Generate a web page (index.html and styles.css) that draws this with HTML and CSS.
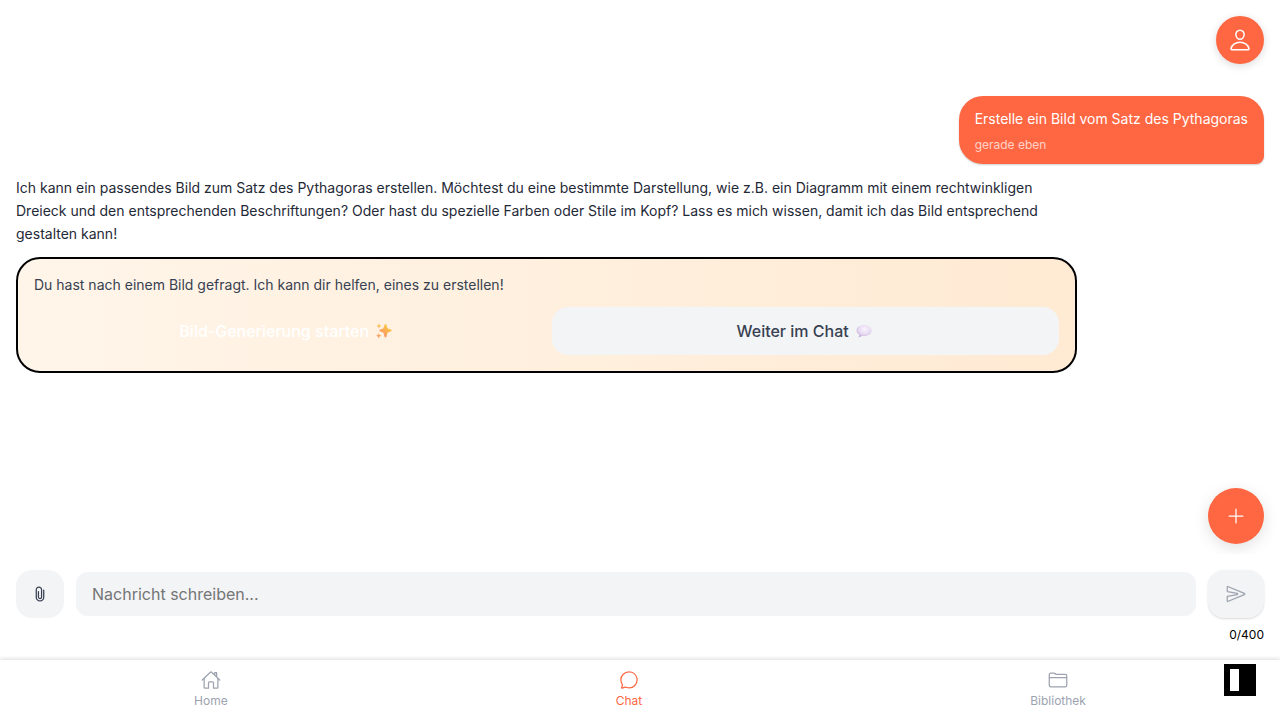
FILE: index.html
```html
<!DOCTYPE html>
<html lang="de">
<head>
<meta charset="utf-8">
<meta name="viewport" content="width=device-width, initial-scale=1">
<title>Chat</title>
<link rel="stylesheet" href="styles.css">
</head>
<body>
<div class="app">
  <header class="topbar">
    <button class="profile" type="button" aria-label="Profil">
      <svg class="icon" viewBox="0 0 512 512" aria-hidden="true"><path d="M344 144c-3.92 52.87-44 96-88 96s-84.15-43.12-88-96c-4-55 35-96 88-96s92 42 88 96z"/><path d="M256 304c-87 0-175.300 48-191.640 138.600C62.390 453.520 68.570 464 80 464h352c11.440 0 17.620-10.480 15.650-21.400C431.300 352 343 304 256 304z"/></svg>
    </button>
  </header>

  <main class="chat">
    <article class="bubble">
      <p class="bubble-text">Erstelle ein Bild vom Satz des Pythagoras</p>
      <time class="bubble-time">gerade eben</time>
    </article>
    <p class="answer">Ich kann ein passendes Bild zum Satz des Pythagoras erstellen. Möchtest du eine bestimmte Darstellung, wie z.B. ein Diagramm mit einem rechtwinkligen Dreieck und den entsprechenden Beschriftungen? Oder hast du spezielle Farben oder Stile im Kopf? Lass es mich wissen, damit ich das Bild entsprechend gestalten kann!</p>
    <section class="offer">
      <p class="offer-text">Du hast nach einem Bild gefragt. Ich kann dir helfen, eines zu erstellen!</p>
      <div class="offer-actions">
        <button class="choice choice-primary" type="button">Bild-Generierung starten
          <svg class="emoji" viewBox="0 0 32 32" aria-hidden="true">
            <defs><linearGradient id="spark" x1="1" y1="0" x2="0.200" y2="1"><stop offset="0" stop-color="#fbd54a"/><stop offset="0.500" stop-color="#fbb351"/><stop offset="1" stop-color="#f58a6b"/></linearGradient></defs>
            <path fill="url(#spark)" d="M19 2q1.500 0 2 2l1.500 5q.500 2 2.500 2.500l4.500 1.500q2 .7 2 2t-2 2L25 18.500q-2 .5-2.500 2.500L21 27q-.5 2-2 2t-2-2l-1.500-6q-.5-2-2.500-2.500L8.500 17q-2-.7-2-2t2-2l4.500-1.500q2-.5 2.500-2.500L17 4q.5-2 2-2z"/>
            <path fill="url(#spark)" d="M6 1l1.500 3.500L11 6 7.500 7.500 6 11 4.500 7.500 1 6l3.500-1.500zM5.500 20l1.500 4 4 1.500L7 27l-1.500 4L4 27l-4-1.500L4 24z"/>
          </svg>
        </button>
        <button class="choice" type="button">Weiter im Chat
          <svg class="emoji" viewBox="0 0 32 32" aria-hidden="true">
            <defs><radialGradient id="speech" cx="0.550" cy="0.350" r="0.650"><stop offset="0" stop-color="#f8f3fc"/><stop offset="0.600" stop-color="#e8dcf2"/><stop offset="1" stop-color="#c6afd8"/></radialGradient></defs>
            <path fill="url(#speech)" d="M16 4c8.500 0 15 4.500 15 11s-6.500 11-15 11c-1.300 0-2.600 0-3.800-.3C10.500 27.500 8 28.500 6 28.500c-1 0-1-.8-.5-1.500.8-1 1-2.500.8-3.800C3 21.300 1 18.500 1 15 1 8.500 7.500 4 16 4z"/>
          </svg>
        </button>
      </div>
    </section>
    <button class="fab" type="button" aria-label="Neuer Chat">
      <svg class="icon-small" viewBox="0 0 512 512" aria-hidden="true"><path d="M256 80v352M432 256H80"/></svg>
    </button>
  </main>

  <form class="composer">
    <div class="composer-row">
      <button class="attach" type="button" aria-label="Datei anhängen">
        <svg class="icon-small" viewBox="0 0 512 512" aria-hidden="true"><path d="M216.080 192v143.850a40.080 40.080 0 0080.150 0l.13-188.550a67.940 67.940 0 10-135.870 0v189.820a95.510 95.510 0 10191 0V159.740"/></svg>
      </button>
      <input class="message" type="text" maxlength="400" placeholder="Nachricht schreiben..." aria-label="Nachricht">
      <button class="send" type="submit" aria-label="Senden">
        <svg class="icon-small" viewBox="0 0 512 512" aria-hidden="true"><path d="M470.300 271.150L43.160 447.310a7.830 7.830 0 01-11.160-7V327a8 8 0 016.510-7.860l247.620-47c17.360-3.290 17.360-28.150 0-31.440l-247.630-47a8 8 0 01-6.500-7.850V72.590c0-5.740 5.880-10.260 11.160-8L470.300 241.760a16 16 0 010 29.390z"/></svg>
      </button>
    </div>
    <span class="counter">0/400</span>
  </form>

  <nav class="tabs">
    <a class="tab" href="#home">
      <svg class="icon-small" viewBox="0 0 512 512" aria-hidden="true"><path d="M80 212v236a16 16 0 0016 16h96V328a24 24 0 0124-24h80a24 24 0 0124 24v136h96a16 16 0 0016-16V212"/><path d="M480 256L266.890 52c-5-5.280-16.690-5.340-21.780 0L32 256M400 179V64h-48v69"/></svg>
      Home
    </a>
    <a class="tab active" href="#chat" aria-current="page">
      <svg class="icon-small" viewBox="0 0 512 512" aria-hidden="true"><path d="M87.480 380c1.200-4.380-1.430-10.470-3.940-14.860a42.630 42.630 0 00-2.540-3.800 199.810 199.810 0 01-33-110C47.640 139.090 140.720 48 255.820 48 356.200 48 440 117.540 459.570 209.850a199 199 0 014.430 41.640c0 112.410-89.490 204.930-204.590 204.930-18.310 0-43-4.600-56.470-8.370s-26.920-8.770-30.390-10.110a31.140 31.140 0 00-11.130-2.070 30.700 30.700 0 00-12.080 2.430L81.500 462.780a15.920 15.920 0 01-4.660 1.220 9.610 9.610 0 01-9.580-9.740 15.850 15.850 0 01.6-3.290z"/></svg>
      Chat
    </a>
    <a class="tab" href="#bibliothek">
      <svg class="icon-small" viewBox="0 0 512 512" aria-hidden="true"><path d="M440 432H72a40 40 0 01-40-40V120a40 40 0 0140-40h75.890a40 40 0 0122.190 6.720l27.840 18.560a40 40 0 0022.190 6.720H440a40 40 0 0140 40v240a40 40 0 01-40 40zM32 192h448"/></svg>
      Bibliothek
    </a>
  </nav>

  <div class="marker" aria-hidden="true"><span class="marker-bar"></span></div>
</div>
</body>
</html>
```
FILE: styles.css
```css
* {
  box-sizing: border-box;
}

body {
  margin: 0;
  font-family: Inter, "Liberation Sans", sans-serif;
  color: #1f2937;
  background: #fff;
}

p {
  margin: 0;
}

button,
input {
  font: inherit;
  color: inherit;
  border: 0;
}

button {
  display: flex;
  align-items: center;
  justify-content: center;
  padding: 0;
}

.app {
  position: relative;
  display: flex;
  flex-direction: column;
  height: 100vh;
}

.icon,
.icon-small {
  display: block;
  fill: none;
  stroke: currentColor;
  stroke-width: 32;
  stroke-linecap: round;
  stroke-linejoin: round;
}

.icon {
  width: 24px;
  height: 24px;
}

.icon-small {
  width: 20px;
  height: 20px;
}

.topbar {
  display: flex;
  justify-content: flex-end;
  padding: 16px;
}

.profile {
  width: 48px;
  height: 48px;
  border-radius: 50%;
  color: #fff;
  background: #ff6642;
  box-shadow: 0 2px 8px rgba(0, 0, 0, 0.15);
}

.chat {
  position: relative;
  flex: 1;
  display: flex;
  flex-direction: column;
  align-items: flex-start;
  gap: 12px;
  padding: 16px;
  overflow: hidden;
}

.bubble {
  align-self: flex-end;
  display: flex;
  flex-direction: column;
  gap: 8px;
  max-width: 85%;
  padding: 12px 16px;
  border-radius: 24px 24px 8px 24px;
  color: #fff;
  background: #ff6642;
  box-shadow: 0 1px 2px rgba(0, 0, 0, 0.2);
}

.bubble-text {
  font-size: 14px;
  line-height: 21px;
}

.bubble-time {
  font-size: 12px;
  line-height: 15px;
  opacity: 0.7;
}

.answer {
  max-width: 85%;
  font-size: 14px;
  line-height: 23px;
}

.offer {
  display: flex;
  flex-direction: column;
  gap: 12px;
  width: 85%;
  padding: 16px;
  border: 2px solid #000;
  border-radius: 24px;
  background: linear-gradient(90deg, #fff5e9, #ffead3);
}

.offer-text {
  font-size: 14px;
  line-height: 20px;
  color: #374151;
}

.offer-actions {
  display: grid;
  grid-template-columns: 1fr 1fr;
  gap: 12px;
}

.choice {
  gap: 6px;
  height: 48px;
  border-radius: 16px;
  font-size: 16px;
  font-weight: 500;
  color: #374151;
  background: #f3f4f6;
}

.choice-primary {
  color: #fff;
  background: transparent;
}

.emoji {
  width: 18px;
  height: 16px;
  margin-right: 2px;
}

.fab {
  position: absolute;
  right: 16px;
  bottom: 10px;
  width: 56px;
  height: 56px;
  border-radius: 50%;
  color: #fff;
  background: #ff6642;
  box-shadow: 0 4px 16px rgba(0, 0, 0, 0.12);
}

.composer {
  display: flex;
  flex-direction: column;
  gap: 8px;
  padding: 16px;
}

.composer-row {
  display: flex;
  align-items: center;
  gap: 12px;
}

.attach,
.send {
  flex: none;
  width: 48px;
  height: 48px;
  border-radius: 16px;
  color: #374151;
  background: #f3f4f6;
}

.send {
  width: 56px;
  color: #9ca3af;
  box-shadow: 0 1px 2px rgba(0, 0, 0, 0.15);
}

.message {
  flex: 1;
  min-width: 0;
  height: 44px;
  padding: 0 16px;
  border-radius: 12px;
  font-size: 16px;
  background: #f3f4f6;
}

.message::placeholder {
  color: #757575;
}

.counter {
  align-self: flex-end;
  font-size: 12px;
  line-height: 18px;
  color: #000;
}

.tabs {
  display: flex;
  justify-content: space-around;
  height: 60px;
  padding: 10px 0;
  background: #fff;
  box-shadow: 0 -1px 4px rgba(0, 0, 0, 0.15);
}

.tab {
  display: flex;
  flex-direction: column;
  align-items: center;
  gap: 2px;
  font-size: 12px;
  line-height: 18px;
  color: #9ca3af;
  text-decoration: none;
}

.tab.active {
  color: #ff6642;
}

.marker {
  position: absolute;
  right: 24px;
  bottom: 24px;
  width: 32px;
  height: 32px;
  padding: 5px 6px;
  background: #000;
}

.marker-bar {
  display: block;
  width: 9px;
  height: 22px;
  background: #fff;
}
```
